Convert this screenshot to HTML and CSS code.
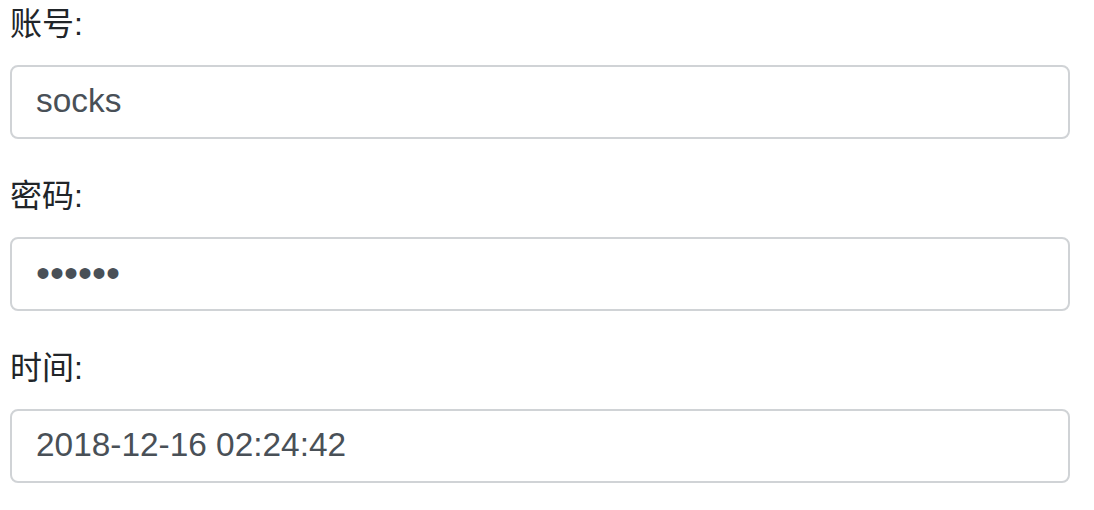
FILE: index.html
```html
<!DOCTYPE html>
<html lang="zh-CN">
<head>
    <meta charset="UTF-8">
    <meta name="viewport" content="width=device-width, initial-scale=1.0">
    <title>账号信息</title>
    <link rel="stylesheet" href="styles.css">
</head>
<body>
    <form class="info-form">
        <div class="form-group">
            <label for="account">账号:</label>
            <input type="text" id="account" class="form-control" value="socks">
        </div>
        <div class="form-group">
            <label for="password">密码:</label>
            <input type="password" id="password" class="form-control password" value="123456">
        </div>
        <div class="form-group">
            <label for="time">时间:</label>
            <input type="text" id="time" class="form-control" value="2018-12-16 02:24:42">
        </div>
    </form>
</body>
</html>
```

FILE: styles.css
```css
body {
    margin: 0; /* 去掉默认边距 */
    background: #fff;
    color: #212529;
    font-family: "Liberation Sans", "Noto Sans CJK SC", sans-serif;
    font-size: 32px;
}

.info-form {
    width: 1060px;
    margin: 0 10px;
}

.form-group {
    margin-bottom: 33px; /* 每组间距 */
}

.form-group label {
    display: block;
    line-height: 48px;
    margin-bottom: 17px;
}

.form-control {
    display: block;
    box-sizing: border-box;
    width: 100%;
    height: 74px;
    padding: 0 24px 2px 24px;
    border: 2px solid #d0d3d6;
    border-radius: 8px;
    background: #fff;
    color: #495057;
    font-family: "Liberation Sans", sans-serif;
    font-size: 33.4px;
    outline: none;
}

.form-control.password {
    font-size: 40px; /* 圆点大一些 */
}
```
